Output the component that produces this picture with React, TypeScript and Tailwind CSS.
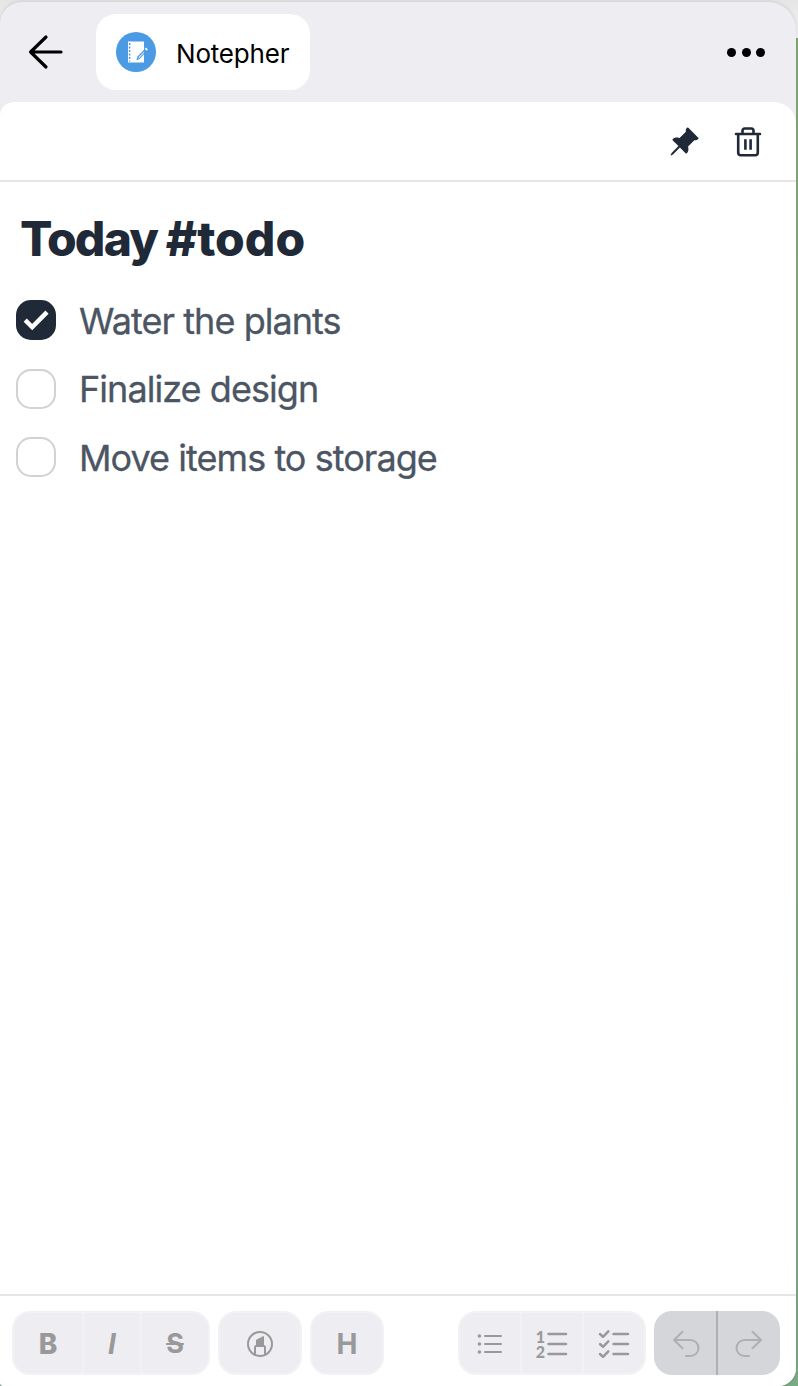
import type { ReactNode } from "react";
import { BsPinAngleFill } from "react-icons/bs";

interface Task {
  label: string;
  done: boolean;
}

const tasks: Task[] = [
  { label: "Water the plants", done: true },
  { label: "Finalize design", done: false },
  { label: "Move items to storage", done: false },
];

function BackIcon() {
  return (
    <svg width="36" height="36" viewBox="0 0 36 36" fill="none" stroke="#000" strokeWidth="3.2" strokeLinecap="round" strokeLinejoin="round">
      <path d="M18 3 2.6 18 18 33M2.6 18h30.4" />
    </svg>
  );
}

function NotepherLogo() {
  return (
    <svg width="40" height="40" viewBox="0 0 40 40">
      <circle cx="20" cy="20" r="20" fill="#4a9ae4" />
      <rect x="12" y="9.5" width="16" height="21" fill="#fff" />
      <path d="M13.6 11v18.5" stroke="#4a9ae4" strokeWidth="1.5" strokeDasharray="1.9 1.6" />
      <path d="M20.3 28.2 21.5 24.6 28.8 17 31 19 23.6 27z" fill="#4a9ae4" />
      <path d="M28 17v4.5l2-2z" fill="#4a9ae4" />
      <path d="m22.3 26.5.4-1.2 5-5.2.5.5-5 5.3z" fill="#fff" />
      <path d="m28.7 16.8 1.2-1.2 2 1.8-1.2 1.3z" fill="#fff" />
    </svg>
  );
}

function TrashIcon() {
  return (
    <svg width="28" height="32" viewBox="0 0 28 32" fill="none" stroke="#1f2937" strokeWidth="2.6" strokeLinecap="round" strokeLinejoin="round">
      <path d="M2 8h24M4.2 8v18.5q0 2.8 2.8 2.8h14q2.8 0 2.8-2.8V8M8.5 8V4.8q0-2.3 2.3-2.3h6.4q2.3 0 2.3 2.3V8" />
      <path d="M11.4 13.2v10.6M16.6 13.2v10.6" strokeLinecap="butt" />
    </svg>
  );
}

function HighlighterIcon() {
  return (
    <svg width="28" height="28" viewBox="0 0 28 28" fill="none" stroke="#999" strokeWidth="2">
      <circle cx="14" cy="14" r="12" />
      <path d="M9 24.5V17.2q0-1.2 1.2-1.2h7.6q1.2 0 1.2 1.2v7.3" />
      <path d="M10 16v-5.4q0-.8.7-1.2L17 6.2q1-.4 1 .6V16z" fill="#999" stroke="none" />
    </svg>
  );
}

function BulletListIcon() {
  return (
    <svg width="26" height="22" viewBox="0 0 26 22" stroke="#999" strokeWidth="2" strokeLinecap="round">
      <path d="M8 3h16M8 11h16M8 19h16" />
      <g fill="#999" stroke="none">
        <circle cx="2.4" cy="3" r="1.8" />
        <circle cx="2.4" cy="11" r="1.8" />
        <circle cx="2.4" cy="19" r="1.8" />
      </g>
    </svg>
  );
}

function NumberListIcon() {
  return (
    <div className="flex items-center gap-[2px]">
      <div className="flex w-[9px] flex-col items-center font-['Lato',sans-serif] text-[16px] leading-[15px] font-black">
        <span>1</span>
        <span>2</span>
      </div>
      <svg width="21" height="28" viewBox="0 0 21 28" stroke="#999" strokeWidth="2.5" strokeLinecap="round">
        <path d="M1.5 4h17.5M1.5 14h17.5M1.5 24h17.5" />
      </svg>
    </div>
  );
}

function CheckListIcon() {
  return (
    <svg width="32" height="30" viewBox="0 0 32 30" fill="none" stroke="#999" strokeWidth="2.5" strokeLinecap="round" strokeLinejoin="round">
      <path d="M15.5 5h14.5M15.5 15h14.5M15.5 25h14.5" />
      <path d="m2 5 3 2.8 5.3-5.4M2 15 5 17.8l5.3-5.4M2 25 5 27.8l5.3-5.4" />
    </svg>
  );
}

function UndoIcon() {
  return (
    <svg width="28" height="28" viewBox="0 0 28 28" fill="none" stroke="#aeafb3" strokeWidth="2" strokeLinecap="round" strokeLinejoin="round">
      <path d="M10.5 1.7 2 10l8.5 8.3M2 10h16.5a8 8 0 0 1 0 16H14" />
    </svg>
  );
}

interface ToolGroupProps {
  children: ReactNode;
  className: string;
}

function ToolGroup({ children, className }: ToolGroupProps) {
  return (
    <div className={`flex h-16 shrink-0 overflow-hidden rounded-[18px] border-2 border-[#f2f2f4] bg-[#eeedf2] font-bold text-[#999] ${className}`}>
      {children}
    </div>
  );
}

interface ToolButtonProps {
  label: string;
  className: string;
  children: ReactNode;
}

function ToolButton({ label, className, children }: ToolButtonProps) {
  return (
    <button aria-label={label} className={`flex shrink-0 items-center justify-center pt-[2px] ${className}`}>
      {children}
    </button>
  );
}

function TaskRow({ task }: { task: Task }) {
  return (
    <li className="flex h-10 items-center gap-[23px]">
      {task.done ? (
        <span className="flex size-10 shrink-0 items-center justify-center rounded-[15px] bg-[#1f2937]">
          <svg width="28" height="22" viewBox="0 0 28 22" fill="none" stroke="#fff" strokeWidth="4.5">
            <path d="m3.2 11.2 7 6.8L25 3.2" />
          </svg>
        </span>
      ) : (
        <span className="size-10 shrink-0 rounded-[15px] border-2 border-[#d1d1d6] bg-white" />
      )}
      <span className="pt-[1px] text-[36px] leading-10 tracking-[-0.95px] whitespace-nowrap text-[#4b5563] [-webkit-text-stroke:0.3px_#4b5563]">{task.label}</span>
    </li>
  );
}

export default function App() {
  return (
    <div className="h-[1386px] w-[798px] overflow-hidden bg-[linear-gradient(to_bottom,#e5e5e5_0px,#f5f5f5_38px,#84ac74_38px,#88b07c_600px,#7aab84_1386px)] pt-[2px] font-['Inter',sans-serif]">
      <div className="flex h-[1384px] w-[796px] flex-col overflow-hidden rounded-tl-[22px] rounded-tr-[28px] rounded-br-[18px] rounded-bl-[4px] bg-[#eeedf2] shadow-[0_0_4px_rgba(0,0,0,0.15)]">
        <header className="flex h-[100px] shrink-0 items-center justify-between pr-[31px] pl-[28px]">
          <div className="flex items-center gap-[32px]">
            <button aria-label="Back">
              <BackIcon />
            </button>
            <div className="flex h-[76px] w-[214px] items-center gap-5 rounded-[20px] bg-white pl-5">
              <NotepherLogo />
              <span className="pt-[2px] text-[26px] tracking-[-0.2px] text-black">Notepher</span>
            </div>
          </div>
          <button aria-label="More" className="flex gap-[5.5px]">
            <span className="size-[9px] rounded-full bg-black" />
            <span className="size-[9px] rounded-full bg-black" />
            <span className="size-[9px] rounded-full bg-black" />
          </button>
        </header>

        <main className="flex grow flex-col rounded-tl-[14px] rounded-tr-[22px] bg-white">
          <div className="flex h-20 shrink-0 items-center justify-end gap-[34px] border-b-2 border-[#e5e5ea] pt-[2px] pr-[34px]">
            <button aria-label="Pin">
              <BsPinAngleFill className="size-[32px] text-[#1f2937]" />
            </button>
            <button aria-label="Delete">
              <TrashIcon />
            </button>
          </div>

          <section className="grow px-4 pt-[29px]">
            <h1 className="pl-1 text-[48px] leading-[56px] font-extrabold tracking-[-1.8px] text-[#1f2937]">
              Today <span className="tracking-[0px]">#todo</span>
            </h1>
            <ul className="mt-[33px] flex flex-col gap-[28.5px]">
              {tasks.map((task) => (
                <TaskRow key={task.label} task={task} />
              ))}
            </ul>
          </section>

          <footer className="flex h-[92px] shrink-0 items-start justify-between border-t-2 border-[#e5e5ea] pt-[15px] pr-4 pl-3">
            <div className="flex gap-2">
              <ToolGroup className="w-[198px]">
                <ToolButton label="Bold" className="w-[70px] border-r-2 border-[#f2f2f4]">
                  <span className="text-[28px] font-extrabold">B</span>
                </ToolButton>
                <ToolButton label="Italic" className="w-[58px] border-r-2 border-[#f2f2f4]">
                  <span className="text-[28px] italic">I</span>
                </ToolButton>
                <ToolButton label="Strikethrough" className="w-[66px]">
                  <span className="text-[27px] line-through decoration-2">S</span>
                </ToolButton>
              </ToolGroup>
              <ToolGroup className="w-[84px]">
                <ToolButton label="Highlight" className="w-full">
                  <HighlighterIcon />
                </ToolButton>
              </ToolGroup>
              <ToolGroup className="w-[74px]">
                <ToolButton label="Heading" className="w-full">
                  <span className="text-[28px]">H</span>
                </ToolButton>
              </ToolGroup>
            </div>
            <div className="flex gap-2">
              <ToolGroup className="w-[188px]">
                <ToolButton label="Bullet list" className="w-[62px] border-r-2 border-[#f2f2f4]">
                  <BulletListIcon />
                </ToolButton>
                <ToolButton label="Numbered list" className="w-[62px] border-r-2 border-[#f2f2f4]">
                  <NumberListIcon />
                </ToolButton>
                <ToolButton label="Checklist" className="w-[60px]">
                  <CheckListIcon />
                </ToolButton>
              </ToolGroup>
              <div className="flex h-16 w-[126px] overflow-hidden rounded-[18px] bg-[#d5d6da]">
                <ToolButton label="Undo" className="w-16 border-r-2 border-[#afb0b4] pl-[1px]">
                  <UndoIcon />
                </ToolButton>
                <ToolButton label="Redo" className="w-[62px] -scale-x-100">
                  <UndoIcon />
                </ToolButton>
              </div>
            </div>
          </footer>
        </main>
      </div>
    </div>
  );
}
